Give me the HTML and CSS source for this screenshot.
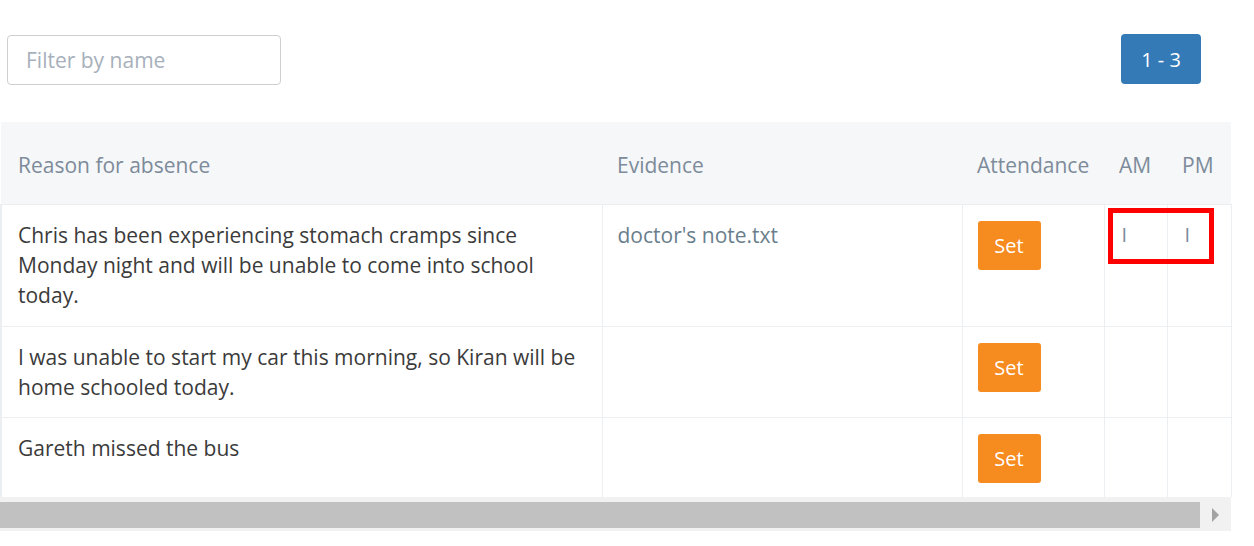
FILE: index.html
```html
<!DOCTYPE html>
<html>
<head>
<meta charset="utf-8">
<link rel="stylesheet" href="styles.css">
</head>
<body>
<div class="page">
  <div class="toolbar">
    <input class="filter" type="text" placeholder="Filter by name">
    <button class="range">1 - 3</button>
  </div>
  <div class="table-wrap">
    <table class="grid">
      <colgroup>
        <col class="c-reason"><col class="c-evidence"><col class="c-att"><col class="c-am"><col class="c-pm">
      </colgroup>
      <thead>
        <tr>
          <th>Reason for absence</th>
          <th>Evidence</th>
          <th>Attendance</th>
          <th>AM</th>
          <th>PM</th>
        </tr>
      </thead>
      <tbody>
        <tr class="r1">
          <td>Chris has been experiencing stomach cramps since Monday night and will be unable to come into school today.</td>
          <td><a class="file" href="#">doctor's note.txt</a></td>
          <td><button class="set">Set</button></td>
          <td class="mark am">I</td>
          <td class="mark pm">I</td>
        </tr>
        <tr class="r2">
          <td>I was unable to start my car this morning, so Kiran will be home schooled today.</td>
          <td></td>
          <td><button class="set">Set</button></td>
          <td></td>
          <td></td>
        </tr>
        <tr class="r3">
          <td>Gareth missed the bus</td>
          <td></td>
          <td><button class="set">Set</button></td>
          <td></td>
          <td></td>
        </tr>
      </tbody>
    </table>
    <div class="highlight"></div>
    <div class="hscroll">
      <div class="thumb"></div>
      <div class="arrow"></div>
    </div>
  </div>
</div>
</body>
</html>
```
FILE: styles.css
```css
* { box-sizing: border-box; }
html, body { margin: 0; padding: 0; background: #fff; }
body {
  font-family: "Open Sans", "Liberation Sans", sans-serif;
  font-size: 21px;
  color: #3b3b3b;
}
.page { width: 1254px; padding-top: 35px; }
.toolbar {
  width: 1230px;
  display: flex;
  justify-content: space-between;
  align-items: flex-start;
  padding: 0 29px 0 7px;
}
.filter {
  width: 274px;
  height: 50px;
  border: 1px solid #cfcfcf;
  border-radius: 4px;
  padding: 0 18px;
  font-family: inherit;
  font-size: 21px;
  color: #333;
  outline: none;
}
.filter::placeholder { color: #a7b0bb; }
.range {
  margin-top: -1px;
  width: 80px;
  height: 50px;
  background: #337ab7;
  color: #fff;
  border: none;
  border-radius: 4px;
  font-family: inherit;
  font-size: 20px;
  padding: 0;
}
.table-wrap {
  position: relative;
  width: 1231px;
  margin-top: 37px;
}
.grid {
  width: 1230px;
  border-collapse: collapse;
  table-layout: fixed;
}
.c-reason { width: 601px; }
.c-evidence { width: 360px; }
.c-att { width: 142px; }
.c-am { width: 63px; }
.c-pm { width: 64px; }
thead th {
  background: #f5f7f9;
  height: 82px;
  padding: 4px 12px 0 15px;
  text-align: left;
  font-weight: normal;
  color: #7d8b9a;
  vertical-align: middle;
}
thead th:first-child { padding-left: 17px; }
tbody td {
  border-top: 1px solid #eceff2;
  border-left: 1px solid #eceff2;
  border-right: 1px solid #eceff2;
  padding: 15px 12px 14px 15px;
  vertical-align: top;
  line-height: 30px;
}
tbody td:first-child { padding-left: 16px; border-left: 2px solid #eceff2; }
.r1 td { height: 122px; }
.r2 td { height: 91px; }
.r3 td { height: 80px; }
.file { color: #6a7e8c; text-decoration: none; }
.set {
  display: block;
  width: 63px;
  height: 49px;
  margin-top: 1px;
  margin-left: 0;
  background: #f68b20;
  color: #fff;
  border: none;
  border-radius: 3px;
  font-family: inherit;
  font-size: 20px;
  padding: 0;
}
.mark { color: #7d8b9a; font-size: 20px; padding-left: 17px !important; }
.highlight {
  position: absolute;
  left: 1108px;
  top: 86px;
  width: 106px;
  height: 56px;
  border: 5px solid #ff0000;
}
.hscroll {
  height: 34px;
  background: #f1f1f1;
  padding-top: 5px;
  display: flex;
  align-items: flex-start;
}
.thumb {
  width: 1200px;
  height: 26px;
  background: #c1c1c1;
}
.arrow {
  margin: 6px 0 0 12px;
  width: 0;
  height: 0;
  border-top: 7px solid transparent;
  border-bottom: 7px solid transparent;
  border-left: 7px solid #a3a3a3;
}
```
